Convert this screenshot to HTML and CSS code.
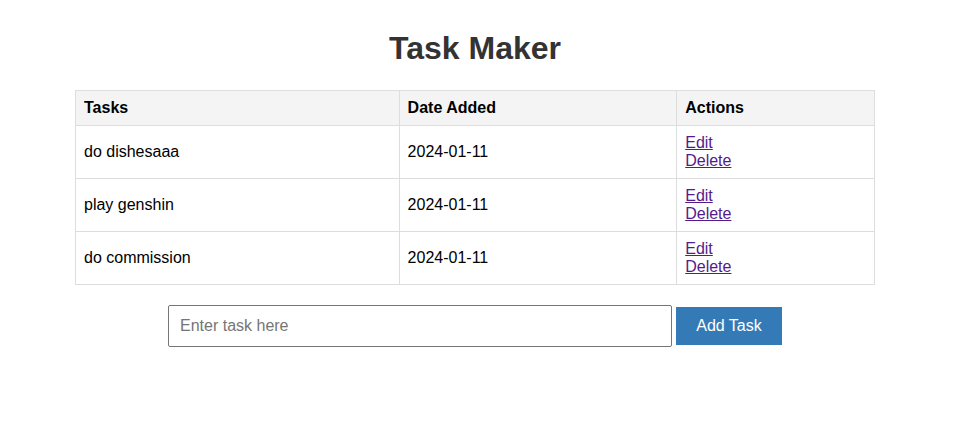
FILE: index.html
```html
<!DOCTYPE html>
<html>
<head>
<meta charset="utf-8">
<title>Task Maker</title>
<link rel="stylesheet" href="styles.css">
</head>
<body>
<div class="app">
  <h1 class="title">Task Maker</h1>
  <table class="tasks">
    <thead>
      <tr>
        <th class="col-task">Tasks</th>
        <th class="col-date">Date Added</th>
        <th class="col-actions">Actions</th>
      </tr>
    </thead>
    <tbody>
      <tr>
        <td>do dishesaaa</td>
        <td>2024-01-11</td>
        <td><a class="link" href="#">Edit</a><br><a class="link" href="#">Delete</a></td>
      </tr>
      <tr>
        <td>play genshin</td>
        <td>2024-01-11</td>
        <td><a class="link" href="#">Edit</a><br><a class="link" href="#">Delete</a></td>
      </tr>
      <tr>
        <td>do commission</td>
        <td>2024-01-11</td>
        <td><a class="link" href="#">Edit</a><br><a class="link" href="#">Delete</a></td>
      </tr>
    </tbody>
  </table>
  <form class="add-form">
    <input class="task-input" type="text" placeholder="Enter task here">
    <button class="add-btn" type="button">Add Task</button>
  </form>
</div>
</body>
</html>
```
FILE: styles.css
```css
html, body {
  background: #fff;
}
body {
  margin: 8px;
  font-family: "Liberation Sans", Arial, sans-serif;
  font-size: 16px;
  color: #000;
}
.app {
  width: 934px;
}
.title {
  text-align: center;
  font-size: 32px;
  font-weight: bold;
  color: #333;
  margin: 22px 0 23px;
  line-height: 37px;
}
.tasks {
  width: 800px;
  margin: 0 auto;
  border-collapse: collapse;
}
.tasks th,
.tasks td {
  border: 1px solid #ddd;
  padding: 8px;
  text-align: left;
  line-height: 18px;
  vertical-align: middle;
}
.tasks th {
  background: #f4f4f4;
  font-weight: bold;
}
.col-task { width: 307px; }
.col-date { width: 261px; }
.col-actions { width: 181px; }
.link {
  color: #551a8b;
  text-decoration: underline;
}
.add-form {
  display: flex;
  justify-content: center;
  align-items: center;
  gap: 4px;
  margin-top: 20px;
}
.task-input {
  box-sizing: border-box;
  width: 504px;
  height: 42px;
  padding: 10px 11px;
  border: 1px solid #767676;
  border-radius: 2px;
  font-family: "Liberation Sans", Arial, sans-serif;
  font-size: 16px;
  color: #000;
  margin: 0;
}
.task-input::placeholder {
  color: #757575;
}
.add-btn {
  box-sizing: border-box;
  height: 38px;
  width: 106px;
  padding: 0;
  border: none;
  background: #337ab7;
  color: #fff;
  font-family: "Liberation Sans", Arial, sans-serif;
  font-size: 16px;
  margin: 0;
}
```
